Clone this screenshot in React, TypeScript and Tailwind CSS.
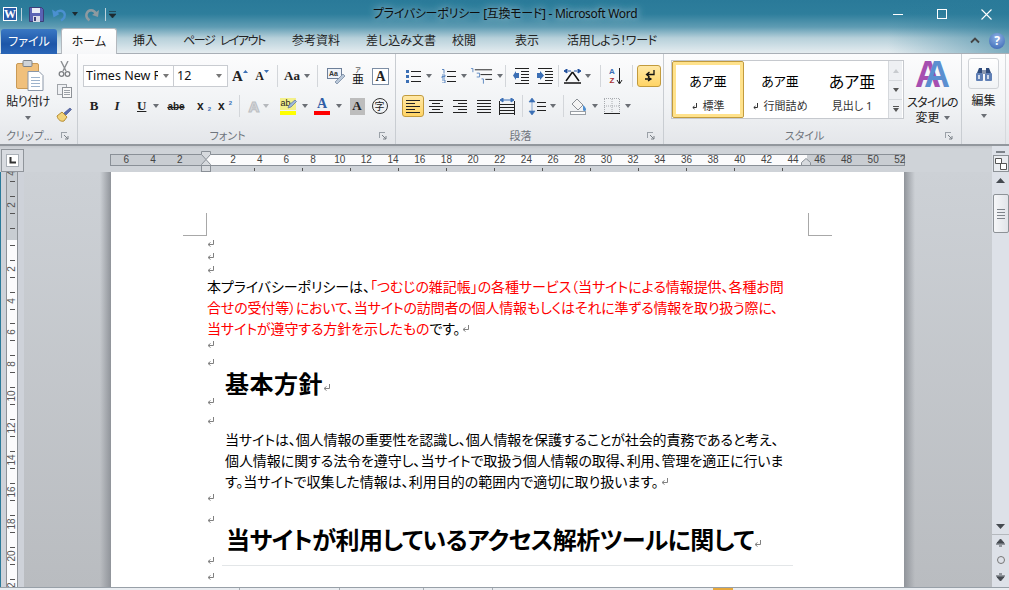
import React from "react";

const rulerNums = ["6", "4", "2", "", "2", "4", "6", "8", "10", "12", "14", "16", "18", "20", "22", "24", "26", "28", "30", "32", "34", "36", "38", "40", "42", "44", "46", "48", "50", "52"];
const vRulerNums = ["4", "2", "", "2", "4", "6", "8", "10", "12", "14", "16", "18", "20", "22"];

const Tri = ({ c = "#6b6f75" }: { c?: string }) => (
  <svg width="6" height="4" viewBox="0 0 6 4" className="shrink-0">
    <path d="M0 0h6L3 4z" fill={c} />
  </svg>
);

const Launcher = () => (
  <svg width="8" height="8" viewBox="0 0 8 8" className="absolute right-[8px] top-[7px]">
    <path d="M0 .5h6M.5 0v6" stroke="#9ba1a8" fill="none" />
    <path d="M3 3l4 4M7 4v3H4" stroke="#7a8087" fill="none" />
  </svg>
);

const Sep = ({ w }: { w: string }) => (
  <div className={`${w} flex h-[22px] shrink-0 justify-center`}>
    <div className="h-full w-px bg-[#d3d6da]" />
  </div>
);

const Slot = ({ w, children, cls = "" }: { w: string; children?: React.ReactNode; cls?: string }) => (
  <div className={`${w} ${cls} flex h-[22px] shrink-0 items-center justify-center gap-[4px]`}>{children}</div>
);

const Mark = ({ cls = "" }: { cls?: string }) => (
  <svg width="8" height="8" viewBox="0 0 8 8" className={`${cls} shrink-0`}>
    <path d="M6.500 0v4.500H1.500M3.500 2.500L1 4.500l2.500 2" stroke="#808080" strokeWidth="1" fill="none" />
  </svg>
);

const MarkRow = ({ cls }: { cls: string }) => (
  <div className={`${cls} flex items-start`}>
    <Mark />
  </div>
);

const Lines = ({ kind }: { kind: "left" | "center" | "right" | "just" }) => {
  const d = {
    left: "M1 2.500h14M1 5.500h9M1 8.500h14M1 11.500h9M1 14.500h14",
    center: "M1 2.500h14M4 5.500h8M1 8.500h14M4 11.500h8M1 14.500h14",
    right: "M1 2.500h14M6 5.500h9M1 8.500h14M6 11.500h9M1 14.500h14",
    just: "M1 2.500h14M1 5.500h14M1 8.500h14M1 11.500h14M1 14.500h14",
  }[kind];
  return (
    <svg width="16" height="16" viewBox="0 0 16 16">
      <path d={d} stroke="#222" fill="none" />
    </svg>
  );
};

const Gallery = ({ sample, label, big, mark, sel }: { sample: string; label: string; big?: boolean; mark?: boolean; sel?: boolean }) => (
  <div className={`flex h-full w-[72px] shrink-0 flex-col items-center ${sel ? "rounded-[2px] border border-[#c29b3d] shadow-[inset_0_0_0_3px_#ffe28c]" : "border border-transparent"}`}>
    <div className={`mt-[8px] flex h-[24px] items-center text-black ${big ? "text-[16px]" : "text-[13px]"}`}>{sample}</div>
    <div className="mt-[4px] flex items-center gap-[5px] text-[11px] text-[#333]">
      {mark && (
        <svg width="6" height="7" viewBox="0 0 6 7">
          <path d="M4.500 0v4.500H1M2.500 3L.8 4.500l1.700 1.500" stroke="#333" fill="none" />
        </svg>
      )}
      <span>{label}</span>
    </div>
  </div>
);

export default function App() {
  return (
    <div className="relative flex h-[590px] w-[1009px] flex-col overflow-hidden bg-[#cfd3d8] font-['Noto_Sans','Noto_Sans_CJK_JP',sans-serif] [font-feature-settings:'palt']">
      {/* title + tabs */}
      <div className="h-[54px] shrink-0 bg-[linear-gradient(90deg,transparent_88%,rgba(42,122,153,0.55)_100%),linear-gradient(180deg,#2a7a99_0,#2e7e9c_14px,#5f9cb3_27px,#b6d0da_38px,#e8eef1_54px)]">
        <div className="flex h-[28px] items-center">
          <div className="ml-[3px] flex h-[14px] w-[14px] items-center justify-center border border-white bg-[#2a5caa] font-['Liberation_Serif',serif] text-[12px] font-bold text-white">W</div>
          <div className="ml-[4px] h-[13px] w-px bg-[#bcd3dc]" />
          <svg width="15" height="15" viewBox="0 0 15 15" className="ml-[7px]">
            <path d="M.5.500h12l2 2v12H.5z" fill="#5a63b5" stroke="#3d3f78" />
            <rect x="3" y="1" width="8" height="5" fill="#e8ecf6" />
            <rect x="4" y="9" width="7" height="6" fill="#d8dae8" />
            <rect x="5" y="10" width="2" height="4" fill="#3d3f78" />
          </svg>
          <svg width="16" height="15" viewBox="0 0 16 15" className="ml-[8px]">
            <path d="M4 6C6 3 11 3 12.500 6.500c1 3-1 5.500-3.500 7" stroke="#4b90d0" strokeWidth="2.400" fill="none" />
            <path d="M0 2.500l1.500 8 6-3.500z" fill="#4b90d0" />
          </svg>
          <div className="ml-[4px]"><Tri c="#1d2a30" /></div>
          <svg width="15" height="15" viewBox="0 0 15 15" className="ml-[6px]">
            <path d="M12 7C10 2 4 2 2.500 7c-.6 3 1 5 3 6.400" stroke="#8e9aa0" strokeWidth="2.600" fill="none" />
            <path d="M15 3l-1 7-6-2z" fill="#8e9aa0" />
          </svg>
          <div className="ml-[6px] h-[13px] w-px bg-[#bcd3dc]" />
          <svg width="7" height="7" viewBox="0 0 7 7" className="ml-[3px]">
            <path d="M0 .5h7M0 3h7L3.500 7z" stroke="#1d2a30" strokeWidth=".6" fill="#1d2a30" />
          </svg>
          <div className="ml-[257px] text-[12px] tracking-[-0.3px] whitespace-nowrap text-[#0d0d0d] [text-shadow:0_0_6px_#9fc3d1,0_0_10px_#9fc3d1]">プライバシーポリシー [互換モード] - Microsoft Word</div>
          <div className="ml-auto flex items-center">
            <div className="h-px w-[10px] bg-white" />
            <div className="ml-[34px] h-[10px] w-[10px] border border-white" />
            <svg width="11" height="11" viewBox="0 0 11 11" className="mr-[17px] ml-[34px]">
              <path d="M.5.500l10 10M10.500.500l-10 10" stroke="#fff" strokeWidth="1.100" />
            </svg>
          </div>
        </div>
        <div className="flex h-[26px] items-end border-b border-[#a9afb6] pt-[1px] text-[12px] text-[#222]">
          <div className="mb-[-1px] ml-[1px] flex h-[25px] w-[56px] items-center justify-center rounded-t-[3px] bg-[linear-gradient(180deg,#3a78c4,#1d56a8_60%,#2a66b8)] text-white">ファイル</div>
          <div className="mb-[-1px] ml-[4px] flex h-[26px] w-[56px] items-center justify-center rounded-t-[3px] border border-b-0 border-[#b3b8be] bg-[linear-gradient(180deg,#fff,#f6f7f9)] pt-[1px]">ホーム</div>
          <div className="flex h-[24px] w-[56px] items-center justify-center">挿入</div>
          <div className="flex h-[24px] w-[102px] items-center justify-center tracking-[-1.5px] [word-spacing:4px]">ページ レイアウト</div>
          <div className="flex h-[24px] w-[82px] items-center justify-center">参考資料</div>
          <div className="flex h-[24px] w-[88px] items-center justify-center">差し込み文書</div>
          <div className="flex h-[24px] w-[38px] items-center justify-center">校閲</div>
          <div className="flex h-[24px] w-[88px] items-center justify-center">表示</div>
          <div className="flex h-[24px] w-[82px] items-center justify-center tracking-[-0.3px] whitespace-nowrap">活用しよう！ワード</div>
          <div className="ml-auto flex h-[25px] items-center">
            <svg width="10" height="7" viewBox="0 0 10 7">
              <path d="M1 5.500l4-4 4 4" stroke="#444" strokeWidth="1.800" fill="none" />
            </svg>
            <div className="mr-[4px] ml-[9px] flex h-[16px] w-[16px] items-center justify-center rounded-full bg-[radial-gradient(circle_at_50%_30%,#8fb2e6,#3462b0)] text-[12px] font-bold text-white">?</div>
          </div>
        </div>
      </div>

      {/* ribbon */}
      <div className="flex h-[92px] shrink-0 border-b-2 border-[#92979d] bg-[linear-gradient(180deg,#fcfcfd,#f1f3f5_55%,#e4e6ea)] text-[#333]">
        {/* clipboard */}
        <div className="relative flex w-[78px] shrink-0 flex-col border-r border-[#c9cdd2]">
          <div className="flex h-[72px]">
            <div className="flex w-[56px] flex-col items-center">
              <svg width="28" height="31" viewBox="0 0 28 31" className="mt-[6px] ml-[3px]">
                <rect x=".5" y="3.500" width="22" height="25" rx="1.500" fill="#f0c07c" stroke="#c99a56" />
                <rect x="7" y=".5" width="9" height="6" rx="1" fill="#cfd3d8" stroke="#7d8288" />
                <path d="M12 11.500h11l4 4v15H12z" fill="#fff" stroke="#8b97a8" />
                <path d="M15 17.500h9M15 20.500h9M15 23.500h9M15 26.500h9" stroke="#9db3cc" />
              </svg>
              <div className="mt-[2px] text-[12px] leading-[18px] tracking-[-0.6px] whitespace-nowrap text-[#222]">貼り付け</div>
              <div className="mt-[5px]"><Tri /></div>
            </div>
            <div className="flex flex-col items-center pt-[6px]">
              <svg width="13" height="16" viewBox="0 0 13 16" className="mt-[1px]">
                <path d="M3 0l5 10M10 0L5 10" stroke="#8c8f93" strokeWidth="1.400" />
                <circle cx="3.500" cy="13" r="2.300" fill="none" stroke="#7c7f83" strokeWidth="1.300" />
                <circle cx="9.500" cy="13" r="2.300" fill="none" stroke="#7c7f83" strokeWidth="1.300" />
              </svg>
              <svg width="15" height="14" viewBox="0 0 15 14" className="mt-[7px]">
                <rect x=".5" y=".5" width="9" height="10" fill="#eef0f3" stroke="#a0a4a9" />
                <rect x="5.500" y="3.500" width="9" height="10" fill="#f8f8f8" stroke="#8d9197" />
                <path d="M7 6.500h6M7 8.500h6M7 10.500h6" stroke="#9da2a8" />
              </svg>
              <svg width="16" height="15" viewBox="0 0 16 15" className="mt-[9px]">
                <path d="M1 9l5-4 5 5-3 4c-3 1-6-1-7-5z" fill="#f3d47a" stroke="#b58c33" />
                <path d="M8 6l6-5 1.500 1.500L10 8z" fill="#5c6fb0" stroke="#3e4e86" strokeWidth=".6" />
              </svg>
            </div>
          </div>
          <div className="relative h-[19px] pl-[6px] text-[11px] leading-[21px] whitespace-nowrap text-[#6f757d]">
            クリップ...
            <Launcher />
          </div>
        </div>

        {/* font */}
        <div className="relative flex w-[318px] shrink-0 flex-col border-r border-[#c9cdd2]">
          <div className="h-[72px] pt-[11px]">
            <div className="flex h-[22px] items-center pl-[5px]">
              <div className="flex h-[22px] w-[91px] items-center justify-between overflow-hidden border border-[#c9ccd1] bg-white pr-[4px] pl-[2px] text-[12.500px] whitespace-nowrap text-[#111]">
                <span className="w-[72px] overflow-hidden">Times New Roman</span>
                <Tri c="#777" />
              </div>
              <div className="flex h-[22px] w-[54px] items-center justify-between border border-l-0 border-[#c9ccd1] bg-white pr-[5px] pl-[3px] text-[12.500px] text-[#111]">
                12
                <Tri c="#777" />
              </div>
              <Slot w="w-[22px]" cls="ml-px">
                <span className="relative font-['Liberation_Serif',serif] text-[15px] font-bold text-[#222]">A</span>
                <svg width="5" height="3" viewBox="0 0 5 3" className="mb-[10px] ml-[-4px]"><path d="M0 3h5L2.500 0z" fill="#3b6fb5" /></svg>
              </Slot>
              <Slot w="w-[22px]">
                <span className="font-['Liberation_Serif',serif] text-[12px] font-bold text-[#222]">A</span>
                <svg width="5" height="3" viewBox="0 0 5 3" className="mb-[10px] ml-[-4px]"><path d="M0 0h5L2.500 3z" fill="#3b6fb5" /></svg>
              </Slot>
              <Sep w="w-[8px]" />
              <Slot w="w-[32px]" cls="gap-[2px]">
                <span className="font-['Liberation_Serif',serif] text-[13px] font-bold text-[#222]">Aa</span>
                <Tri />
              </Slot>
              <Sep w="w-[8px]" />
              <Slot w="w-[22px]" cls="ml-[4px]">
                <svg width="19" height="17" viewBox="0 0 19 17">
                  <rect x=".5" y=".5" width="14" height="10" fill="#eef2f8" stroke="#6d7f99" />
                  <path d="M8 14L16 6l2 2-8 8z" fill="#b9c7d8" stroke="#7a8ca3" strokeWidth=".8" />
                  <text x="2" y="8" fontSize="7" fontWeight="700" fill="#333" fontFamily="Liberation Sans">Aa</text>
                </svg>
              </Slot>
              <Slot w="w-[22px]">
                <div className="flex flex-col items-center leading-none">
                  <span className="h-[6px] text-[6px] leading-[6px] text-[#222]">ア</span>
                  <span className="text-[12px] leading-[13px] text-[#111]">亜</span>
                </div>
              </Slot>
              <Slot w="w-[23px]">
                <div className="flex h-[17px] w-[17px] items-center justify-center border border-[#7d8ea5] bg-white font-['Liberation_Serif',serif] text-[14px] font-bold text-[#222]">A</div>
              </Slot>
            </div>
            <div className="mt-[8px] flex h-[22px] items-center pl-[5px] text-[#222]">
              <Slot w="w-[22px]" cls="font-['Liberation_Serif',serif] text-[13px] font-bold">B</Slot>
              <Slot w="w-[24px]" cls="font-['Liberation_Serif',serif] text-[13px] font-bold italic">I</Slot>
              <Slot w="w-[36px]" cls="justify-start gap-[7px] pl-[8px] font-['Liberation_Serif',serif] text-[13px] font-bold underline">U<Tri /></Slot>
              <Slot w="w-[22px]" cls="font-['Liberation_Sans',sans-serif] text-[10px] font-bold line-through">abe</Slot>
              <Slot w="w-[22px]" cls="ml-[6px] gap-0 font-['Liberation_Sans',sans-serif] text-[12px] font-bold">x<span className="mt-[6px] text-[6px] text-[#3b6fb5]">2</span></Slot>
              <Slot w="w-[20px]" cls="gap-0 font-['Liberation_Sans',sans-serif] text-[12px] font-bold">x<span className="mb-[6px] text-[6px] text-[#3b6fb5]">2</span></Slot>
              <Sep w="w-[8px]" />
              <Slot w="w-[32px]" cls="gap-[3px] text-[15px] font-bold text-[#d7d9dc]">
                <span className="[-webkit-text-stroke:1px_#bcbfc3]">A</span>
                <Tri c="#b5b8bc" />
              </Slot>
              <Slot w="w-[32px]" cls="ml-[3px] gap-[6px]">
                <div className="relative flex flex-col items-center">
                  <div className="h-[12px] w-[16px] bg-[#f3f08a] pr-[5px] text-center font-['Liberation_Sans',sans-serif] text-[9px] leading-[11px] text-[#222]">ab</div>
                  <svg width="10" height="10" viewBox="0 0 10 10" className="absolute top-[1px] left-[7px]">
                    <path d="M1 9l1-3 6-5 1.500 1.500L4 8z" fill="#9db8dc" stroke="#5a7096" strokeWidth=".7" />
                  </svg>
                  <div className="mt-[1px] h-[4px] w-[16px] bg-[#ffff00]" />
                </div>
                <Tri />
              </Slot>
              <Slot w="w-[36px]" cls="gap-[6px]">
                <div className="flex flex-col items-center">
                  <span className="font-['Liberation_Serif',serif] text-[14px] leading-[13px] font-bold text-[#2f5da6]">A</span>
                  <div className="mt-[1px] h-[4px] w-[16px] bg-[#ff0000]" />
                </div>
                <Tri />
              </Slot>
              <Slot w="w-[22px]">
                <div className="flex h-[17px] w-[15px] items-center justify-center bg-[#bdbdbd] font-['Liberation_Serif',serif] text-[13px] font-bold text-[#222]">A</div>
              </Slot>
              <Slot w="w-[23px]">
                <div className="flex h-[16px] w-[16px] items-center justify-center rounded-full border border-[#333] text-[10px] leading-none text-[#222]">字</div>
              </Slot>
            </div>
          </div>
          <div className="relative h-[19px] pr-[18px] text-center text-[11px] leading-[21px] text-[#6f757d]">
            フォント
            <Launcher />
          </div>
        </div>

        {/* paragraph */}
        <div className="relative flex w-[268px] shrink-0 flex-col border-r border-[#c9cdd2]">
          <div className="h-[72px] pt-[11px]">
            <div className="flex h-[22px] items-center pl-[8px]">
              <Slot w="w-[30px]" cls="gap-[5px]">
                <svg width="15" height="14" viewBox="0 0 15 14">
                  <path d="M5 2.500h10M5 7.500h10M5 12.500h10" stroke="#222" />
                  <path d="M0 1h3v3H0zM0 6h3v3H0zM0 11h3v3H0z" fill="#3b6fb5" />
                </svg>
                <Tri />
              </Slot>
              <Slot w="w-[32px]" cls="ml-[4px] gap-[5px]">
                <svg width="15" height="14" viewBox="0 0 15 14">
                  <path d="M6 2.500h9M6 7.500h9M6 12.500h9" stroke="#222" />
                  <path d="M1 .5h2v4M1 6h3v1.500H1V9h3M1 11h3v3H1" stroke="#3b6fb5" fill="none" strokeWidth=".8" />
                </svg>
                <Tri />
              </Slot>
              <Slot w="w-[33px]" cls="gap-[2px]">
                <svg width="24" height="17" viewBox="0 0 24 17">
                  <path d="M5 1.500h18M11 6.500h12M16 11.500h7" stroke="#222" />
                  <path d="M1 0h2v4M7 5h3v4H7M12 11h2v5" stroke="#3b6fb5" fill="none" strokeWidth=".8" />
                </svg>
                <Tri />
              </Slot>
              <Sep w="w-[4px]" />
              <Slot w="w-[22px]" cls="ml-[3px]">
                <svg width="17" height="16" viewBox="0 0 17 16">
                  <path d="M2 .5h14M8 3.500h8M8 6.500h8M8 9.500h8M8 12.500h8M2 15.500h14" stroke="#222" />
                  <path d="M6 5v5H3v2L0 7.500 3 3v2z" fill="#3b6fb5" />
                </svg>
              </Slot>
              <Slot w="w-[22px]" cls="ml-[2px]">
                <svg width="17" height="16" viewBox="0 0 17 16">
                  <path d="M1 .5h14M8 3.500h8M8 6.500h8M8 9.500h8M8 12.500h8M1 15.500h14" stroke="#222" />
                  <path d="M0 5v5h3v2l4-4.500L3 3v2z" fill="#3b6fb5" />
                </svg>
              </Slot>
              <Sep w="w-[4px]" />
              <Slot w="w-[35px]" cls="gap-[3px]">
                <svg width="17" height="15" viewBox="0 0 17 15">
                  <path d="M8.500 3L2 12M8.500 3L15 12M0 14h17" stroke="#111" strokeWidth="1.500" fill="none" />
                  <path d="M0 2l3-2v4zM17 2l-3-2v4zM4 2h3M10 2h3" fill="#1f4e9c" stroke="#1f4e9c" />
                </svg>
                <Tri />
              </Slot>
              <Sep w="w-[10px]" />
              <Slot w="w-[22px]">
                <div className="flex h-[18px] flex-col items-center font-['Liberation_Sans',sans-serif] text-[8px] leading-[9px] font-bold">
                  <span className="text-[#3b6fb5]">A</span>
                  <span className="text-[#a33]">Z</span>
                </div>
                <svg width="7" height="17" viewBox="0 0 7 17" className="ml-[-3px]"><path d="M3.500 0v15M1 12l2.500 4L6 12" stroke="#222" fill="none" /></svg>
              </Slot>
              <Sep w="w-[10px]" />
              <div className="flex h-[22px] w-[24px] items-center justify-center rounded-[3px] border border-[#c29b3d] bg-[linear-gradient(180deg,#ffe8a6,#ffd465)]">
                <svg width="13" height="14" viewBox="0 0 13 14">
                  <path d="M11 1v4.500H4M6.500 3L3.500 5.500l3 2.500M2 10h5M5 8l3 2-3 2" stroke="#111" strokeWidth="1.300" fill="none" />
                </svg>
              </div>
            </div>
            <div className="mt-[8px] flex h-[22px] items-center pl-[6px]">
              <div className="flex h-[22px] w-[22px] shrink-0 items-center justify-center rounded-[3px] border border-[#c29b3d] bg-[linear-gradient(180deg,#ffe8a6,#ffd465)]">
                <Lines kind="left" />
              </div>
              <Slot w="w-[24px]"><Lines kind="center" /></Slot>
              <Slot w="w-[24px]"><Lines kind="right" /></Slot>
              <Slot w="w-[24px]"><Lines kind="just" /></Slot>
              <Slot w="w-[22px]">
                <svg width="16" height="17" viewBox="0 0 16 17">
                  <path d="M.5 3v14M15.500 3v14M1 6.500h14M1 9.500h14M1 12.500h14M1 15.500h14" stroke="#222" />
                  <path d="M1 2l3-2v4zM15 2l-3-2v4zM4 2h8" fill="#3b6fb5" stroke="#3b6fb5" />
                </svg>
              </Slot>
              <Sep w="w-[8px]" />
              <Slot w="w-[32px]" cls="gap-[2px]">
                <svg width="18" height="17" viewBox="0 0 18 17">
                  <path d="M4 0l3 4H1zM4 17l3-4H1zM4 4v9" fill="#3b6fb5" stroke="#3b6fb5" strokeWidth=".6" />
                  <path d="M9 4.500h9M9 8.500h9M9 12.500h9" stroke="#222" />
                </svg>
                <Tri />
              </Slot>
              <Sep w="w-[10px]" />
              <Slot w="w-[32px]" cls="gap-[5px]">
                <svg width="17" height="17" viewBox="0 0 17 17">
                  <path d="M7 1l6 6-5 5-6-6z" fill="#f4f4f4" stroke="#8a8f95" />
                  <path d="M13 7c2 2 3 3 3 4.500a1.500 1.500 0 0 1-3 0z" fill="#4f8fd0" />
                  <rect x=".5" y="13.500" width="15" height="3" fill="#fdfdfd" stroke="#9a9fa5" />
                </svg>
                <Tri />
              </Slot>
              <Slot w="w-[35px]" cls="gap-[5px]">
                <svg width="16" height="16" viewBox="0 0 16 16">
                  <path d="M.5 1v14M8 1v14M15.500 1v14M0 .5h16M0 8h16" stroke="#a8abaf" strokeDasharray="1 1" />
                  <path d="M0 15.500h16" stroke="#222" />
                </svg>
                <Tri />
              </Slot>
            </div>
          </div>
          <div className="relative h-[19px] pr-[18px] text-center text-[11px] leading-[21px] text-[#6f757d]">
            段落
            <Launcher />
          </div>
        </div>

        {/* styles */}
        <div className="relative flex w-[298px] shrink-0 flex-col border-r border-[#c9cdd2]">
          <div className="flex h-[72px]">
            <div className="mt-[6px] ml-[7px] flex h-[59px] w-[233px] shrink-0 border border-[#c6c9ce] bg-white">
              <Gallery sample="あア亜" label="標準" mark sel />
              <Gallery sample="あア亜" label="行間詰め" mark />
              <Gallery sample="あア亜" label="見出し 1" big />
              <div className="flex w-[14px] flex-col border-l border-[#d5d8dc] bg-[#eef0f3]">
                <div className="flex h-[20px] items-center justify-center border-b border-[#d5d8dc]">
                  <svg width="6" height="4" viewBox="0 0 6 4"><path d="M0 4h6L3 0z" fill="#c8cbcf" /></svg>
                </div>
                <div className="flex h-[19px] items-center justify-center border-b border-[#d5d8dc]"><Tri c="#555" /></div>
                <div className="flex flex-1 flex-col items-center justify-center gap-[1px]">
                  <div className="h-px w-[6px] bg-[#555]" />
                  <Tri c="#555" />
                </div>
              </div>
            </div>
            <div className="flex flex-1 flex-col items-center pt-[7px]">
              <div className="flex h-[28px] items-end font-['Liberation_Sans',sans-serif] text-[36px] leading-[28px] font-bold">
                <span className="text-[#a64fb0]">A</span>
                <span className="ml-[-17px] text-[#5b8fd0]">A</span>
              </div>
              <div className="mt-[6px] text-[12px] leading-[15px] tracking-[-0.8px] whitespace-nowrap text-[#222]">スタイルの</div>
              <div className="flex items-center gap-[4px] text-[12px] leading-[15px] text-[#222]">変更<Tri /></div>
            </div>
          </div>
          <div className="relative h-[19px] pr-[16px] text-center text-[11px] leading-[21px] text-[#6f757d]">
            スタイル
            <Launcher />
          </div>
        </div>

        {/* edit */}
        <div className="flex w-[44px] shrink-0 flex-col items-center border-r border-[#d6d9dd]">
          <div className="mt-[4px] flex h-[31px] w-[31px] items-center justify-center rounded-[3px] border border-[#d0d3d7] bg-[linear-gradient(180deg,#fff,#f1f3f5)]">
            <svg width="16" height="14" viewBox="0 0 16 14">
              <path d="M1 6l2-5h3v5zM15 6l-2-5h-3v5z" fill="#2f4b7c" />
              <rect x="0" y="6" width="7" height="8" rx="1" fill="#5f7fb5" />
              <rect x="9" y="6" width="7" height="8" rx="1" fill="#5f7fb5" />
              <rect x="6" y="3" width="4" height="4" fill="#8a98b0" />
              <rect x="2" y="8" width="2" height="4" fill="#cfd9ea" />
              <rect x="11" y="8" width="2" height="4" fill="#cfd9ea" />
            </svg>
          </div>
          <div className="mt-[3px] text-[12px] leading-[18px] text-[#222]">編集</div>
          <div className="mt-[4px]"><Tri /></div>
        </div>
      </div>

      {/* horizontal ruler row */}
      <div className="flex h-[26px] shrink-0 bg-[linear-gradient(180deg,#c3c6cb,#cfd3d8_3px)]">
        <div className="mt-[3px] ml-[1px] flex h-[23px] w-[23px] shrink-0 items-center justify-center border border-[#90959b] bg-[#d8dbe0]">
          <div className="flex h-[13px] w-[13px] items-center justify-center border border-[#aab0b7] bg-white">
            <svg width="7" height="7" viewBox="0 0 7 7"><path d="M1.500 0v5.500H7" stroke="#333" strokeWidth="2" fill="none" /></svg>
          </div>
        </div>
        <div className="relative ml-[86px] w-[795px] shrink-0">
          <div className="mt-[8px] flex h-[12px] items-center border border-[#8a9097] bg-[linear-gradient(90deg,#c9cdd2_95px,#fbfbfc_95px,#fbfbfc_696px,#c9cdd2_696px)] pl-[2px] font-['Liberation_Sans',sans-serif] text-[10px] text-[#444]">
            {rulerNums.map((n, i) => (
              <div key={i} className="w-[26.680px] shrink-0 text-center leading-[10px]">{n}</div>
            ))}
          </div>
          <div className="mt-[2px] flex pl-[144px]">
            {Array.from({ length: 12 }).map((_, i) => (
              <div key={i} className="flex h-[3px] w-[48px] shrink-0 justify-start">
                <div className="h-full w-px bg-[#555]" />
              </div>
            ))}
          </div>
          <svg width="11" height="21" viewBox="0 0 11 21" className="absolute top-[5px] left-[91px]">
            <path d="M.5.500h9v3L5 8.500.5 3.500z" fill="#d7dade" stroke="#8a9097" />
            <path d="M5 8.500l4.500 5v1h-9v-1z" fill="#d7dade" stroke="#8a9097" />
            <rect x=".5" y="14.500" width="9" height="6" fill="#d7dade" stroke="#8a9097" />
          </svg>
          <svg width="10" height="8" viewBox="0 0 10 8" className="absolute top-[12px] left-[691px]">
            <path d="M.5 7.500v-3L5 .5l4.500 4v3z" fill="#d7dade" stroke="#8a9097" />
          </svg>
        </div>
        <div className="ml-[87px] flex w-[17px] shrink-0 flex-col items-center bg-[#dde1e8] pt-[5px]">
          <div className="h-[2px] w-[9px] bg-[#7d838a]" />
          <div className="mt-[2px] flex h-[17px] w-[16px] items-center justify-center border border-[#8d9297] bg-[#e9ecf0]">
            <svg width="12" height="12" viewBox="0 0 12 12">
              <path d="M.5.500h6v5h-6zM5.500 5.500h6v6h-6z" fill="#fff" stroke="#555" />
            </svg>
          </div>
        </div>
      </div>

      {/* doc area */}
      <div className="flex min-h-0 flex-1 overflow-hidden border-l border-[#2a7a99] bg-[linear-gradient(180deg,#cdd1d6,#b9bcc0)]">
        <div className="flex w-[23px] shrink-0 justify-center self-stretch bg-[#ced2d9] pr-[6px] pl-[5px]">
          <div className="h-full w-[13px] overflow-hidden border-x border-[#8d9297] bg-[linear-gradient(180deg,#c8cdd2_68px,#fbfbfc_68px)] font-['Liberation_Sans',sans-serif] text-[10px] text-[#555]">
            <div className="mt-[-15px] flex flex-col items-center">
              {vRulerNums.map((n, i) => (
                <div key={i} className="flex h-[31.900px] w-full shrink-0 flex-col items-center justify-center gap-[2px]">
                  <div className="h-px w-[5px] bg-[#555]" />
                  <div className="flex h-[12px] -rotate-90 items-center justify-center leading-none whitespace-nowrap">{n}</div>
                  <div className="h-px w-[5px] bg-[#555]" />
                </div>
              ))}
            </div>
          </div>
        </div>

        <div className="ml-[76px] w-[11px] shrink-0 bg-[linear-gradient(90deg,transparent,#90949a)]" />
        <div className="relative w-[793px] shrink-0 bg-white pt-[66px] pl-[96px] text-[14px] text-black">
          <div className="absolute top-[41px] left-[72px] h-[23px] w-[24px] border-r border-b border-[#a8a8a8]" />
          <div className="absolute top-[41px] left-[697px] h-[23px] w-[24px] border-b border-l border-[#a8a8a8]" />

          <MarkRow cls="h-[13px] pt-[2px]" />
          <MarkRow cls="h-[13px] pt-[2px]" />
          <MarkRow cls="h-[13px] pt-[2px]" />
          <div className="h-[21px] leading-[19px] tracking-[-0.06px] whitespace-nowrap">
            本プライバシーポリシーは、<span className="text-[#ff0000]">「つむじの雑記帳」の各種サービス（当サイトによる情報提供、各種お問</span>
          </div>
          <div className="h-[21px] leading-[19px] tracking-[-0.17px] whitespace-nowrap text-[#ff0000]">合せの受付等）において、当サイトの訪問者の個人情報もしくはそれに準ずる情報を取り扱う際に、</div>
          <div className="flex h-[22px] items-center pb-[2px] leading-[20px] tracking-[-0.1px] whitespace-nowrap">
            <span className="text-[#ff0000]">当サイトが遵守する方針を示したもの</span>です。<Mark cls="ml-[2px]" />
          </div>
          <MarkRow cls="h-[9px]" />
          <MarkRow cls="h-[22px] pt-[9px]" />
          <div className="flex h-[26px] items-center pb-[2px] pl-[18px] text-[24px] leading-[24px] font-bold tracking-[0.5px] whitespace-nowrap">
            基本方針<Mark cls="mt-[8px]" />
          </div>
          <MarkRow cls="h-[14px]" />
          <MarkRow cls="h-[18px] pt-[5px]" />
          <div className="h-[21px] pl-[18px] leading-[19px] tracking-[-0.1px] whitespace-nowrap">当サイトは、個人情報の重要性を認識し、個人情報を保護することが社会的責務であると考え、</div>
          <div className="h-[21px] pl-[18px] leading-[19px] tracking-[-0.07px] whitespace-nowrap">個人情報に関する法令を遵守し、当サイトで取扱う個人情報の取得、利用、管理を適正に行いま</div>
          <div className="flex h-[21px] items-center pb-[2px] pl-[18px] leading-[19px] whitespace-nowrap">す。当サイトで収集した情報は、利用目的の範囲内で適切に取り扱います。<Mark cls="ml-[2px]" /></div>
          <MarkRow cls="h-[10px] pt-[1px]" />
          <MarkRow cls="h-[26px] pt-[13px]" />
          <div className="flex h-[24px] items-center pb-[2px] pl-[19px] text-[24px] leading-[22px] font-bold tracking-[-0.6px] whitespace-nowrap">
            当サイトが利用しているアクセス解析ツールに関して<Mark cls="mt-[8px]" />
          </div>
          <div className="relative flex h-[16px] items-start pt-[4px]">
            <Mark />
            <div className="absolute top-[12px] left-[15px] h-px w-[571px] bg-[#e3e6e8]" />
          </div>
          <MarkRow cls="h-[16px] pt-[4px]" />
        </div>
        <div className="w-[11px] shrink-0 bg-[linear-gradient(90deg,#90949a,transparent)]" />

        <div className="ml-[77px] flex w-[17px] shrink-0 flex-col items-center bg-[#dde1e8]">
          <svg width="9" height="5" viewBox="0 0 9 5" className="mt-[6px] shrink-0"><path d="M0 5h9L4.500 0z" fill="#454a50" /></svg>
          <div className="mt-[11px] flex h-[39px] w-[16px] flex-col items-center justify-center gap-[2px] rounded-[2px] border border-[#8d9297] bg-[linear-gradient(90deg,#f6f7f9,#e1e4e9)]">
            <div className="h-px w-[8px] bg-[#7d838a]" />
            <div className="h-px w-[8px] bg-[#7d838a]" />
            <div className="h-px w-[8px] bg-[#7d838a]" />
            <div className="h-px w-[8px] bg-[#7d838a]" />
          </div>
          <svg width="9" height="5" viewBox="0 0 9 5" className="mt-auto"><path d="M0 0h9L4.500 5z" fill="#454a50" /></svg>
          <div className="mt-[5px] h-px w-full bg-[#b4b8bd]" />
          <svg width="9" height="9" viewBox="0 0 9 9" className="mt-[4px]"><path d="M4.500 0L8 4H1zM0 5h9M3 7h3" fill="#454a50" stroke="#454a50" /></svg>
          <div className="mt-[8px] h-[8px] w-[8px] rounded-full border border-[#777]" />
          <svg width="9" height="9" viewBox="0 0 9 9" className="mt-[8px] mb-[6px]"><path d="M4.500 9L8 5H1zM0 4h9M3 2h3" fill="#454a50" stroke="#454a50" /></svg>
        </div>
      </div>

      {/* status bar edge */}
      <div className="flex h-[3px] shrink-0 border-t border-[#98a0a8] bg-[#eaedf1]">
        <div className="ml-[239px] h-full w-px bg-[#a8adb3]" />
        <div className="ml-[99px] h-full w-px bg-[#a8adb3]" />
        <div className="ml-[83px] h-full w-px bg-[#a8adb3]" />
        <div className="ml-[68px] h-full w-px bg-[#a8adb3]" />
        <div className="ml-[220px] h-full w-[20px] bg-[#e6a83c]" />
      </div>
    </div>
  );
}
